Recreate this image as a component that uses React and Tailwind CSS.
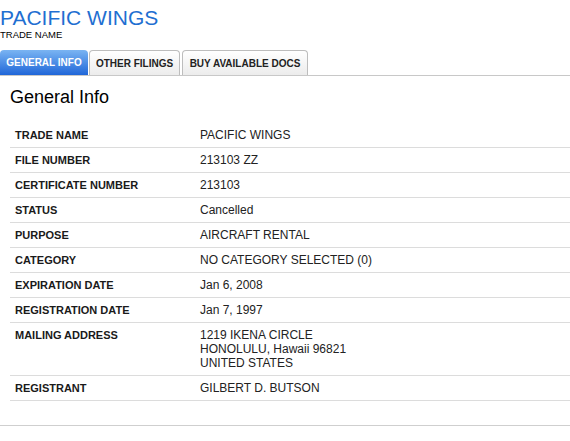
import React from 'react';

const rows = [
  ['TRADE NAME', ['PACIFIC WINGS']],
  ['FILE NUMBER', ['213103 ZZ']],
  ['CERTIFICATE NUMBER', ['213103']],
  ['STATUS', ['Cancelled']],
  ['PURPOSE', ['AIRCRAFT RENTAL']],
  ['CATEGORY', ['NO CATEGORY SELECTED (0)']],
  ['EXPIRATION DATE', ['Jan 6, 2008']],
  ['REGISTRATION DATE', ['Jan 7, 1997']],
  ['MAILING ADDRESS', ['1219 IKENA CIRCLE', 'HONOLULU, Hawaii 96821', 'UNITED STATES']],
  ['REGISTRANT', ['GILBERT D. BUTSON']],
];

const App = () => {
  return (
    <div className="w-[570px] h-[441px] bg-white font-['Liberation_Sans',Arial,sans-serif] overflow-hidden">
      {/* Header */}
      <div className="pt-[6px]">
        <h1 className="text-[21px] leading-[24px] text-[#1f6fd1]">PACIFIC WINGS</h1>
        <div className="text-[9.5px] leading-[10px] text-black">TRADE NAME</div>
      </div>

      {/* Tabs */}
      <div className="mt-[11px] flex items-end gap-[1px] border-b border-[#c8c8c8] h-[25px]">
        <div className="w-[88px] h-[25px] flex items-center justify-center rounded-t-[4px] bg-gradient-to-b from-[#7ab4f2] to-[#1f66d8] text-white text-[10px] font-bold">
          GENERAL INFO
        </div>
        <div className="w-[91px] h-[25px] flex items-center justify-center rounded-t-[4px] border border-b-0 border-[#bdbdbd] bg-gradient-to-b from-white to-[#ececec] text-[#222] text-[10px] font-bold">
          OTHER FILINGS
        </div>
        <div className="w-[126px] ml-[1px] h-[25px] flex items-center justify-center rounded-t-[4px] border border-b-0 border-[#bdbdbd] bg-gradient-to-b from-white to-[#ececec] text-[#222] text-[10px] font-bold">
          BUY AVAILABLE DOCS
        </div>
      </div>

      {/* Content */}
      <div className="border-b border-[#cfcfcf] pb-[24px]">
        <h2 className="ml-[10px] mt-[10px] text-[18px] leading-[22px] text-black">General Info</h2>
        <div className="ml-[10px] mt-[15px]">
          {rows.map(([label, values]) => (
            <div key={label} className="flex border-b border-[#dcdcdc] pt-[5px] pb-[5px]">
              <div className="w-[190px] pl-[5px] text-[11px] leading-[14px] font-bold text-[#1a1a1a]">{label}</div>
              <div className="text-[12px] leading-[14px] text-[#222]">
                {values.map((v) => (
                  <div key={v}>{v}</div>
                ))}
              </div>
            </div>
          ))}
        </div>
      </div>
    </div>
  );
};

export default App;
